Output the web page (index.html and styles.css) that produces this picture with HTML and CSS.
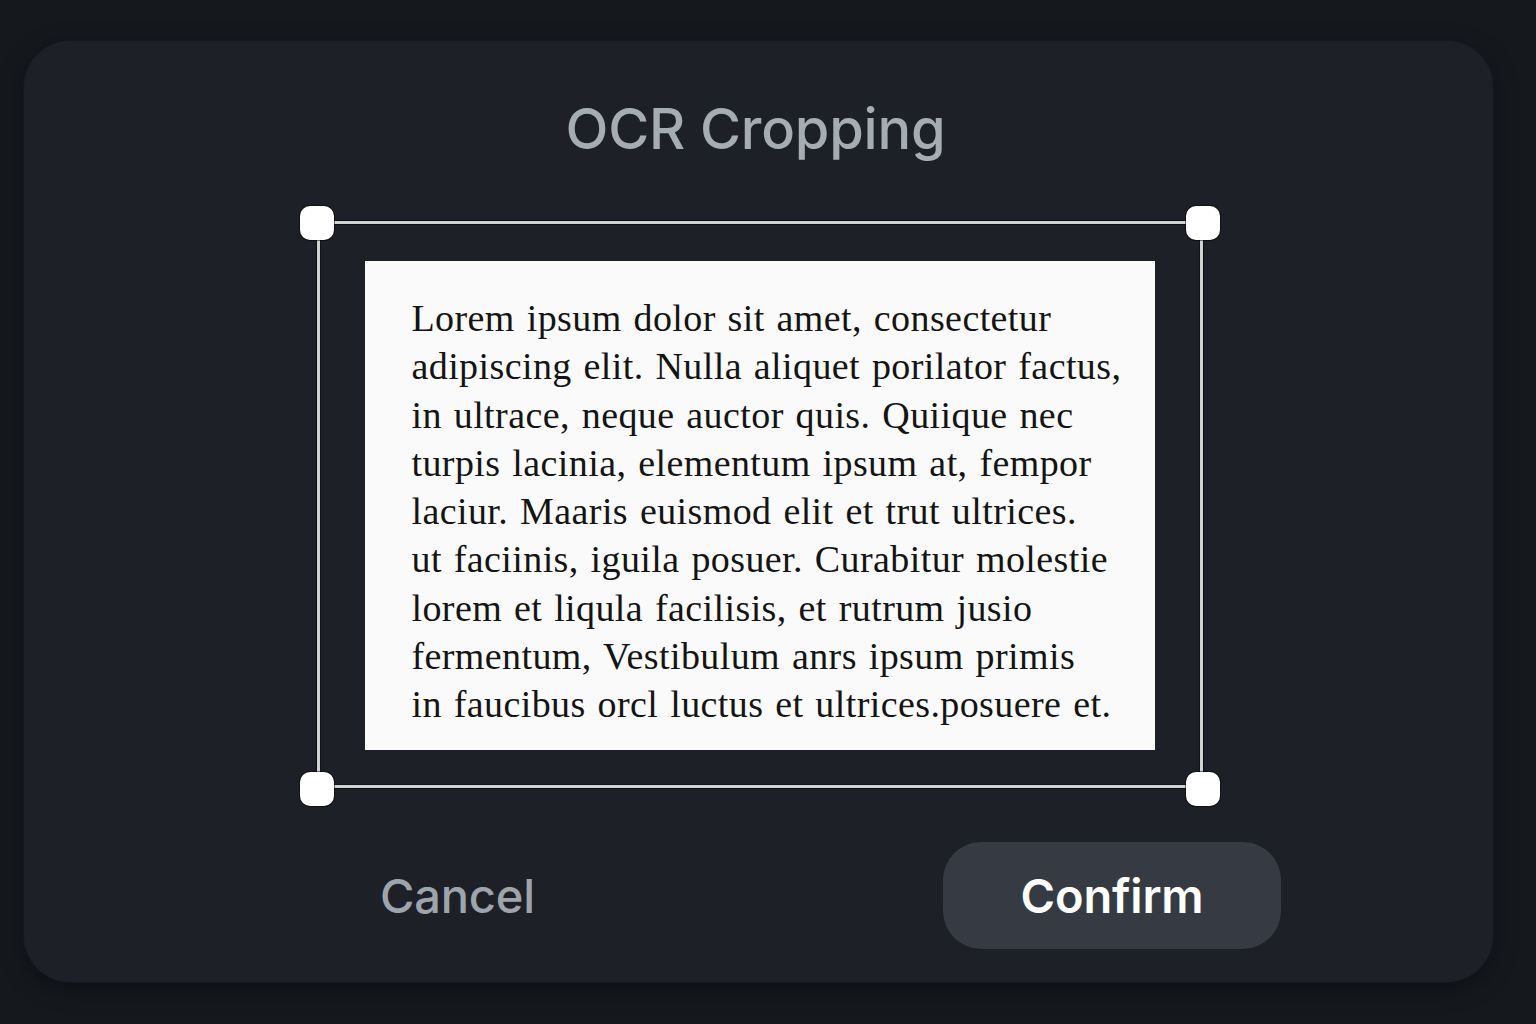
FILE: index.html
```html
<!DOCTYPE html>
<html lang="en">
<head>
<meta charset="utf-8">
<title>OCR Cropping</title>
<link rel="stylesheet" href="styles.css">
</head>
<body>
<main class="card">
  <h1 class="title">OCR Cropping</h1>
  <div class="stage">
    <div class="frame">
      <span class="handle tl"></span>
      <span class="handle tr"></span>
      <span class="handle bl"></span>
      <span class="handle br"></span>
      <div class="paper">
        <p class="doc">
          <span class="ln">Lorem ipsum dolor sit amet, consectetur</span>
          <span class="ln">adipiscing elit. Nulla aliquet porilator factus,</span>
          <span class="ln">in ultrace, neque auctor quis. Quiique nec</span>
          <span class="ln">turpis lacinia, elementum ipsum at, fempor</span>
          <span class="ln">laciur. Maaris euismod elit et trut ultrices.</span>
          <span class="ln">ut faciinis, iguila posuer. Curabitur molestie</span>
          <span class="ln">lorem et liqula facilisis, et rutrum jusio</span>
          <span class="ln">fermentum, Vestibulum anrs ipsum primis</span>
          <span class="ln">in faucibus orcl luctus et ultrices.posuere et.</span>
        </p>
      </div>
    </div>
  </div>
  <div class="actions">
    <button class="btn cancel" type="button">Cancel</button>
    <button class="btn confirm" type="button">Confirm</button>
  </div>
</main>
</body>
</html>
```

FILE: styles.css
```css
* { box-sizing: border-box; }
html, body { margin: 0; padding: 0; }
body {
  width: 1536px;
  height: 1024px;
  background: #15181d;
  padding: 41px 43px 42px 24px;
  font-family: Inter, "Noto Sans", "Liberation Sans", sans-serif;
  overflow: hidden;
}
.card {
  width: 1469px;
  height: 941px;
  background: #1d2127;
  border-radius: 46px;
  box-shadow: 0 0 0 1px rgba(255,255,255,0.02), 0 6px 24px rgba(0,0,0,0.35);
  display: flex;
  flex-direction: column;
  align-items: center;
}
.title {
  margin: 52px 0 0 -6px;
  font-size: 56px;
  line-height: 72px;
  font-weight: 500;
  color: #a6acb4;
  letter-spacing: -0.2px;
}
.stage {
  margin-top: 56px;
  margin-left: 2px;
}
.frame {
  position: relative;
  width: 886px;
  height: 567px;
  border: 3px solid #d0d2d4;
  box-shadow: 0 0 0 1px rgba(0,0,0,0.55), inset 0 0 0 1px rgba(0,0,0,0.4);
  padding: 37px 45px 35px 45px;
}
.handle {
  position: absolute;
  width: 34px;
  height: 34px;
  background: #ffffff;
  border-radius: 10px;
  box-shadow: 0 0 0 1px rgba(0,0,0,0.5);
}
.handle.tl { left: -20px; top: -18px; }
.handle.tr { right: -20px; top: -18px; }
.handle.bl { left: -20px; bottom: -21px; }
.handle.br { right: -20px; bottom: -21px; }
.paper {
  width: 790px;
  height: 489px;
  background: #fafafa;
  padding: 33px 0 0 47px;
}
.doc {
  margin: 0;
  font-family: "Liberation Serif", "DejaVu Serif", serif;
  font-size: 38px;
  line-height: 48.3px;
  color: #141414;
  letter-spacing: 0.4px;
  word-spacing: 2px;
}
.ln {
  display: block;
  white-space: nowrap;
}
.actions {
  margin-top: 54px;
  width: 100%;
  display: flex;
  align-items: center;
  justify-content: space-between;
  padding: 0 212px 0 346px;
}
.btn {
  font-family: Inter, "Noto Sans", "Liberation Sans", sans-serif;
  border: none;
  cursor: pointer;
}
.cancel {
  background: transparent;
  color: #9ea4ac;
  font-size: 47px;
  font-weight: 500;
  padding: 0 10px;
  letter-spacing: -0.2px;
}
.confirm {
  width: 338px;
  height: 107px;
  background: #363a42;
  color: #ffffff;
  border-radius: 38px;
  font-size: 47px;
  font-weight: 600;
  letter-spacing: -0.2px;
}
```
